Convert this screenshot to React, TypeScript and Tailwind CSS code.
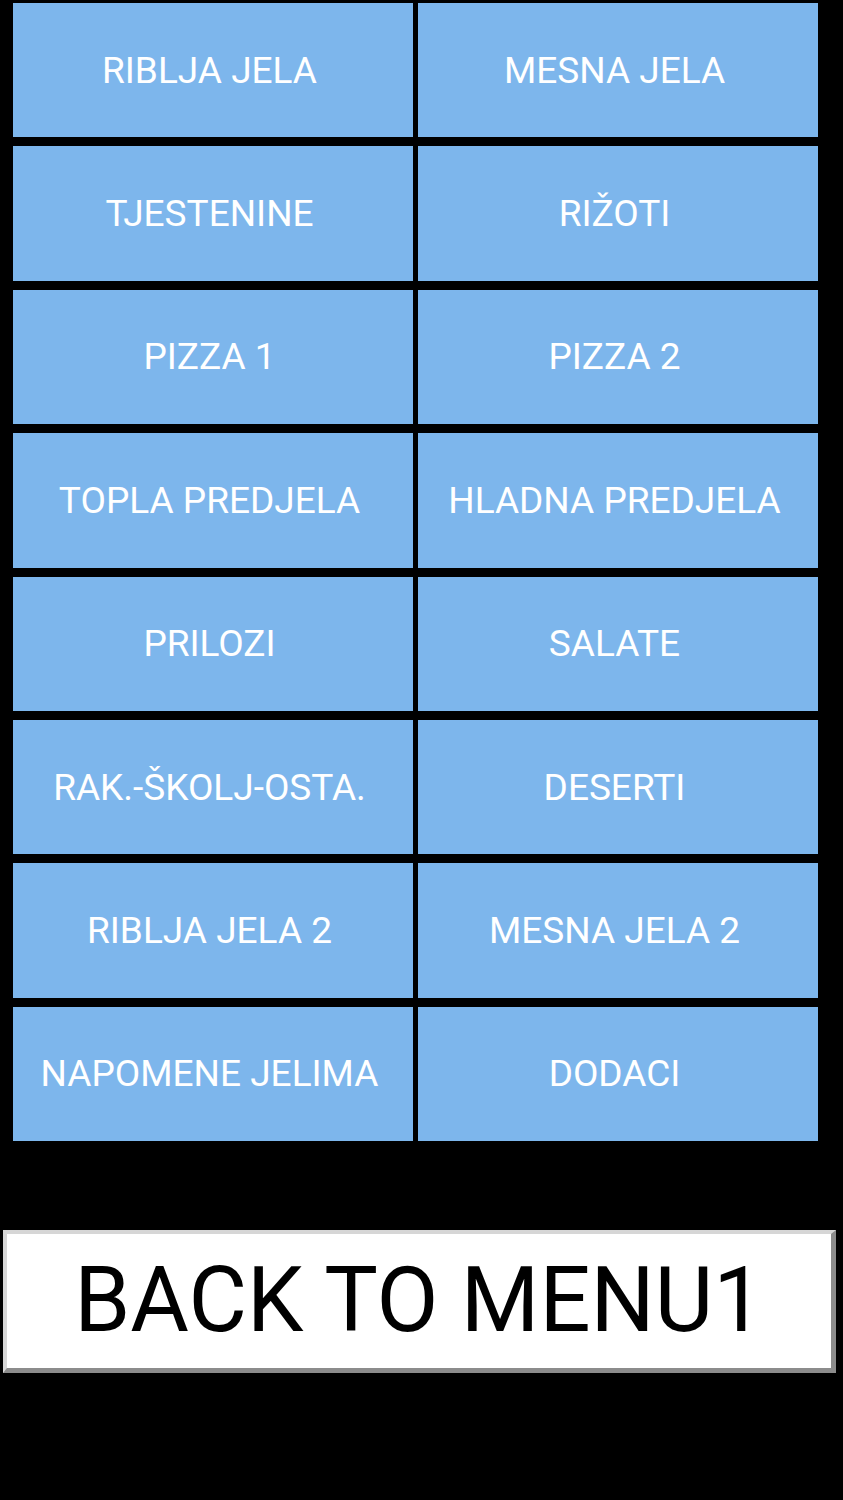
import React from 'react';

const categories = [
  'RIBLJA JELA',
  'MESNA JELA',
  'TJESTENINE',
  'RIŽOTI',
  'PIZZA 1',
  'PIZZA 2',
  'TOPLA PREDJELA',
  'HLADNA PREDJELA',
  'PRILOZI',
  'SALATE',
  'RAK.-ŠKOLJ-OSTA.',
  'DESERTI',
  'RIBLJA JELA 2',
  'MESNA JELA 2',
  'NAPOMENE JELIMA',
  'DODACI',
];

const App: React.FC = () => {
  return (
    <div className="w-[843px] h-[1500px] bg-black font-['Roboto',sans-serif] pt-[3px]">
      <div className="ml-[13px] w-[805px] grid grid-cols-2 gap-x-[5px] gap-y-[9px]">
        {categories.map((c) => (
          <button
            key={c}
            className="h-[134.4px] bg-[#7db6ec] text-white text-[37px] leading-none flex items-center justify-center pr-[7px]"
          >
            {c}
          </button>
        ))}
      </div>

      <div className="mt-[89px] ml-[3px] w-[833px]">
        <button className="w-full h-[143px] bg-white border-t-[4px] border-l-[4px] border-r-[5px] border-b-[5px] border-t-[#d6d6d6] border-l-[#d6d6d6] border-r-[#8c8c8c] border-b-[#8c8c8c] text-black text-[90px] leading-none flex items-center justify-center">
          BACK TO MENU1
        </button>
      </div>
    </div>
  );
};

export default App;
